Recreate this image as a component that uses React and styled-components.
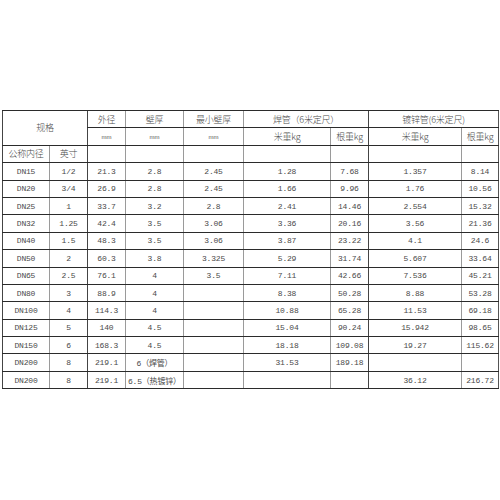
import React from "react"
import styled, { createGlobalStyle } from "styled-components"

const GlobalStyle = createGlobalStyle`
  html, body {
    margin: 0;
    padding: 0;
    background: #ffffff;
  }
`

const widths = [47, 38, 38, 58, 60, 87, 38, 93, 37]
// left border shade for each column (true = dark rule)
const darkLeft = [true, false, true, false, false, false, false, true, false]

const rows = [
  ["DN15", "1/2", "21.3", "2.8", "2.45", "1.28", "7.68", "1.357", "8.14"],
  ["DN20", "3/4", "26.9", "2.8", "2.45", "1.66", "9.96", "1.76", "10.56"],
  ["DN25", "1", "33.7", "3.2", "2.8", "2.41", "14.46", "2.554", "15.32"],
  ["DN32", "1.25", "42.4", "3.5", "3.06", "3.36", "20.16", "3.56", "21.36"],
  ["DN40", "1.5", "48.3", "3.5", "3.06", "3.87", "23.22", "4.1", "24.6"],
  ["DN50", "2", "60.3", "3.8", "3.325", "5.29", "31.74", "5.607", "33.64"],
  ["DN65", "2.5", "76.1", "4", "3.5", "7.11", "42.66", "7.536", "45.21"],
  ["DN80", "3", "88.9", "4", "", "8.38", "50.28", "8.88", "53.28"],
  ["DN100", "4", "114.3", "4", "", "10.88", "65.28", "11.53", "69.18"],
  ["DN125", "5", "140", "4.5", "", "15.04", "90.24", "15.942", "98.65"],
  ["DN150", "6", "168.3", "4.5", "", "18.18", "109.08", "19.27", "115.62"],
  ["DN200", "8", "219.1", "6（焊管）", "", "31.53", "189.18", "", ""],
  ["DN200", "8", "219.1", "6.5（热镀锌）", "", "", "", "36.12", "216.72"],
]

const Page = styled.div`
  padding: 110px 2px 0 2px;
  width: 496px;
`

const Sheet = styled.table`
  width: 496px;
  border-collapse: collapse;
  table-layout: fixed;
  font-family: "Liberation Mono", "Noto Sans CJK SC", monospace;
  font-size: 8px;
  color: #4a4a4a;
  border-right: 1.5px solid #555;
`

const Row = styled.tr`
  height: 17.4px;
`

const Cell = styled.td`
  padding: 0;
  text-align: ${(p) => (p.$left ? "left" : "center")};
  padding-left: ${(p) => (p.$left ? "2px" : "0")};
  border-top: 1.5px solid #2b2b2b;
  border-bottom: 1.5px solid #2b2b2b;
  border-left: ${(p) => (p.$dark ? "1.5px solid #444" : "1px solid #9a9a9a")};
  white-space: nowrap;
  overflow: hidden;
  letter-spacing: -0.2px;
`

const Head = styled(Cell)`
  font-family: "Noto Sans CJK SC", "Liberation Serif", serif;
  font-size: 9px;
  font-weight: 300;
`

const Unit = styled(Cell)`
  font-family: "Liberation Sans", sans-serif;
  font-size: 6px;
  color: #555;
  letter-spacing: 0;
`

const App = () => {
  return (
    <Page>
      <GlobalStyle />
      <Sheet>
        <colgroup>
          {widths.map((w, i) => (
            <col key={i} style={{ width: w }} />
          ))}
        </colgroup>
        <tbody>
          <Row>
            <Head rowSpan={2} colSpan={2} $dark>规格</Head>
            <Head $dark>外径</Head>
            <Head>壁厚</Head>
            <Head>最小壁厚</Head>
            <Head colSpan={2}>焊管（6米定尺）</Head>
            <Head colSpan={2} $dark>镀锌管(6米定尺)</Head>
          </Row>
          <Row>
            <Unit $dark>mm</Unit>
            <Unit>mm</Unit>
            <Unit>mm</Unit>
            <Head>米重kg</Head>
            <Head>根重kg</Head>
            <Head $dark>米重kg</Head>
            <Head>根重kg</Head>
          </Row>
          <Row>
            <Head $dark>公称内径</Head>
            <Head>英寸</Head>
            {widths.slice(2).map((_, i) => (
              <Cell key={i} $dark={darkLeft[i + 2]} />
            ))}
          </Row>
          {rows.map((r, ri) => (
            <Row key={ri}>
              {r.map((v, ci) => (
                <Cell
                  key={ci}
                  $dark={darkLeft[ci]}
                  $left={ci === 3 && v.includes("热")}
                >
                  {v}
                </Cell>
              ))}
            </Row>
          ))}
        </tbody>
      </Sheet>
    </Page>
  )
}

export default App
